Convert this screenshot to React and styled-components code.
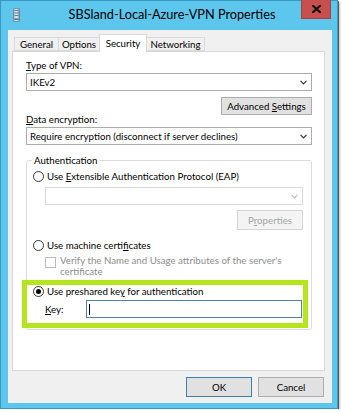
import React from 'react';
import styled, { createGlobalStyle } from 'styled-components';

const Global = createGlobalStyle`
  html, body { margin: 0; padding: 0; background: #ffffff; }
  * { box-sizing: border-box; }
  body {
    font-family: Lato, "Liberation Sans", sans-serif;
    font-size: 9.7px;
    color: #000;
  }
`;

const Window = styled.div`
  width: 338px;
  height: 409px;
  background: #5cc6ec;
  border: 1px solid #3b98c2;
  box-shadow: 1px 1px 0 rgba(0,0,0,0.55), 2px 2px 2px rgba(0,0,0,0.25);
  display: flex;
  flex-direction: column;
  padding: 0 5px 5px 7px;
`;

const TitleBar = styled.div`
  height: 29px;
  margin: 0 -5px 0 -7px;
  padding: 0 6px 0 12px;
  display: grid;
  grid-template-columns: minmax(0, 1fr) auto minmax(0, 1fr);
  align-items: start;
`;

const AppIcon = styled.svg`
  margin-top: 7px;
  display: block;
`;

const Title = styled.div`
  font-size: 12.7px;
  line-height: 17px;
  margin-top: 5px;
  color: #000;
  white-space: nowrap;
`;

const CloseButton = styled.div`
  justify-self: end;
  width: 30px;
  height: 19px;
  margin-top: -1px;
  background: #c7504f;
  border: 1px solid #a84241;
  border-top: none;
  display: flex;
  align-items: center;
  justify-content: center;
`;

const Body = styled.div`
  flex: 1;
  background: #f0f0f0;
  display: flex;
  flex-direction: column;
  padding: 4px 7px 6px 4px;
`;

const TabStrip = styled.div`
  display: flex;
  align-items: flex-start;
  height: 18px;
  margin-bottom: -1px;
  padding-left: 2px;
  position: relative;
  z-index: 1;
`;

const Tab = styled.div`
  width: ${p => p.$w}px;
  height: ${p => (p.$active ? 18 : 14)}px;
  margin-top: ${p => (p.$active ? 0 : 3)}px;
  margin-left: ${p => (p.$first ? 0 : -1)}px;
  background: ${p => (p.$active ? '#ffffff' : '#f0f0f0')};
  border: 1px solid #d9d9d9;
  border-bottom: ${p => (p.$active ? 'none' : '1px solid #d9d9d9')};
  display: flex;
  justify-content: center;
  align-items: ${p => (p.$active ? 'flex-start' : 'center')};
  padding-top: ${p => (p.$active ? 2 : 0)}px;
  line-height: 12px;
`;

const Panel = styled.div`
  flex: 1;
  background: #ffffff;
  border: 1px solid #d9d9d9;
  padding: 7px 12px 0 13px;
  display: flex;
  flex-direction: column;
`;

const Label = styled.div`
  line-height: 12px;
  height: 12px;
  margin-top: ${p => p.$mt || 0}px;
`;

const U = styled.span`
  text-decoration: underline;
  text-underline-offset: 1px;
`;

const Combo = styled.div`
  height: 18px;
  margin-top: ${p => p.$mt || 0}px;
  margin-left: ${p => p.$ml || 0}px;
  border: 1px solid ${p => (p.$disabled ? '#d9d9d9' : '#acacac')};
  background: #fff;
  display: flex;
  align-items: center;
  padding: 0 4px 0 3px;
  line-height: 12px;
  white-space: nowrap;
`;

const ComboText = styled.span`
  flex: 1;
`;

const Button = styled.div`
  width: ${p => p.$w}px;
  height: ${p => p.$h || 18}px;
  margin-top: ${p => p.$mt || 0}px;
  align-self: ${p => p.$align || 'auto'};
  border: 1px solid ${p => (p.$default ? '#3c7fb1' : p.$disabled ? '#d5d5d5' : '#adadad')};
  background: ${p => (p.$disabled ? '#f4f4f4' : '#e1e1e1')};
  color: ${p => (p.$disabled ? '#a3a3a3' : '#000')};
  display: flex;
  align-items: center;
  justify-content: center;
  line-height: 12px;
  white-space: nowrap;
`;

const GroupBox = styled.div`
  margin-top: 15px;
  border: 1px solid #dcdcdc;
  border-radius: 3px;
  padding: 0 8px 1px 6px;
  display: flex;
  flex-direction: column;
`;

const Legend = styled.div`
  width: fit-content;
  margin: -7px 0 0 -1px;
  padding: 0 2px;
  background: #fff;
  line-height: 12px;
  height: 12px;
`;

const RadioRow = styled.div`
  display: flex;
  align-items: center;
  gap: 3px;
  height: 12px;
  line-height: 12px;
  margin-top: ${p => p.$mt || 0}px;
`;

const Radio = styled.span`
  width: 11px;
  height: 11px;
  border-radius: 50%;
  border: 1px solid #3a3a3a;
  background: #fff;
  display: flex;
  align-items: center;
  justify-content: center;
  flex: none;
  &::after {
    content: '';
    display: ${p => (p.$checked ? 'block' : 'none')};
    width: 5px;
    height: 5px;
    border-radius: 50%;
    background: #000;
  }
`;

const CheckRow = styled.div`
  display: flex;
  align-items: flex-start;
  gap: 4px;
  margin: 4px 0 0 12px;
`;

const CheckBox = styled.span`
  width: 11px;
  height: 11px;
  margin-top: 2px;
  border: 1px solid #bcbcbc;
  background: #fff;
  flex: none;
`;

const CheckText = styled.p`
  margin: 0;
  line-height: 11px;
  color: #8d8d8d;
`;

const Highlight = styled.div`
  margin: 3px -5px 0 -11px;
  border: 5px solid #b5e51d;
  padding: 0 1px 5px 6px;
  display: flex;
  flex-direction: column;
`;

const KeyRow = styled.div`
  display: flex;
  align-items: center;
  margin: 3px 0 0 12px;
`;

const KeyLabel = styled.div`
  width: 41px;
  line-height: 12px;
`;

const KeyInput = styled.div`
  flex: 1;
  height: 18px;
  border: 1px solid #4f80b0;
  background: #fff;
  display: flex;
  align-items: center;
  padding-left: 2px;
`;

const Caret = styled.span`
  width: 1px;
  height: 11px;
  background: #000;
`;

const ButtonRow = styled.div`
  display: flex;
  justify-content: flex-end;
  gap: 6px;
  margin-top: 6px;
  padding-right: 1px;
`;

const Chevron = ({ color = '#333' }) => (
  <svg width="7" height="5" viewBox="0 0 7 5">
    <path d="M0.5 0.8 L3.5 3.8 L6.5 0.8" fill="none" stroke={color} strokeWidth="1.2" />
  </svg>
);

export default function App() {
  return (
    <>
      <Global />
      <Window>
        <TitleBar>
          <AppIcon width="7" height="14" viewBox="0 0 7 14">
            <defs>
              <linearGradient id="dev" x1="0" x2="1" y1="0" y2="0">
                <stop offset="0" stopColor="#9fb4c6" />
                <stop offset="0.5" stopColor="#e6eef5" />
                <stop offset="1" stopColor="#7f95a8" />
              </linearGradient>
            </defs>
            <rect x="0.5" y="0.5" width="6" height="13" rx="0.8" fill="url(#dev)" stroke="#6c8196" strokeWidth="0.8" />
            <rect x="1.5" y="2" width="4" height="1" fill="#5d7ea0" />
            <rect x="1.5" y="4.5" width="4" height="1" fill="#5d7ea0" />
            <rect x="1.5" y="7" width="4" height="1" fill="#5d7ea0" />
            <rect x="1.5" y="10.5" width="4" height="1.5" fill="#3f6d99" />
          </AppIcon>
          <Title>SBSland-Local-Azure-VPN Properties</Title>
          <CloseButton>
            <svg width="9" height="8" viewBox="0 0 9 8">
              <path d="M1 0.8 L8 7.2 M8 0.8 L1 7.2" stroke="#111" strokeWidth="2.1" strokeLinecap="square" />
            </svg>
          </CloseButton>
        </TitleBar>
        <Body>
          <TabStrip>
            <Tab $first $w={45}>General</Tab>
            <Tab $w={42}>Options</Tab>
            <Tab $w={48} $active>Security</Tab>
            <Tab $w={59}>Networking</Tab>
          </TabStrip>
          <Panel>
            <Label><U>T</U>ype of VPN:</Label>
            <Combo $mt={2}>
              <ComboText>IKEv2</ComboText>
              <Chevron />
            </Combo>
            <Button $w={91} $mt={6} $align="flex-end"><span>Advanced <U>S</U>ettings</span></Button>
            <Label $mt={-2}><U>D</U>ata encryption:</Label>
            <Combo $mt={2}>
              <ComboText>Require encryption (disconnect if server declines)</ComboText>
              <Chevron />
            </Combo>
            <GroupBox>
              <Legend>Authentication</Legend>
              <RadioRow $mt={4}>
                <Radio />
                <span>Use <U>E</U>xtensible Authentication Protocol (EAP)</span>
              </RadioRow>
              <Combo $mt={5} $ml={12} $disabled>
                <ComboText />
                <Chevron color="#bdbdbd" />
              </Combo>
              <Button $w={66} $h={20} $mt={5} $align="flex-end" $disabled><span>P<U>r</U>operties</span></Button>
              <RadioRow $mt={9}>
                <Radio />
                <span>Use machine certi<U>f</U>icates</span>
              </RadioRow>
              <CheckRow>
                <CheckBox />
                <CheckText>Verify the Name and Usage attributes of the server's certificate</CheckText>
              </CheckRow>
              <Highlight>
                <RadioRow>
                  <Radio $checked />
                  <span>Use preshared ke<U>y</U> for authentication</span>
                </RadioRow>
                <KeyRow>
                  <KeyLabel><U>K</U>ey:</KeyLabel>
                  <KeyInput><Caret /></KeyInput>
                </KeyRow>
              </Highlight>
            </GroupBox>
          </Panel>
          <ButtonRow>
            <Button $w={66} $h={20} $default>OK</Button>
            <Button $w={66} $h={20}>Cancel</Button>
          </ButtonRow>
        </Body>
      </Window>
    </>
  );
}
